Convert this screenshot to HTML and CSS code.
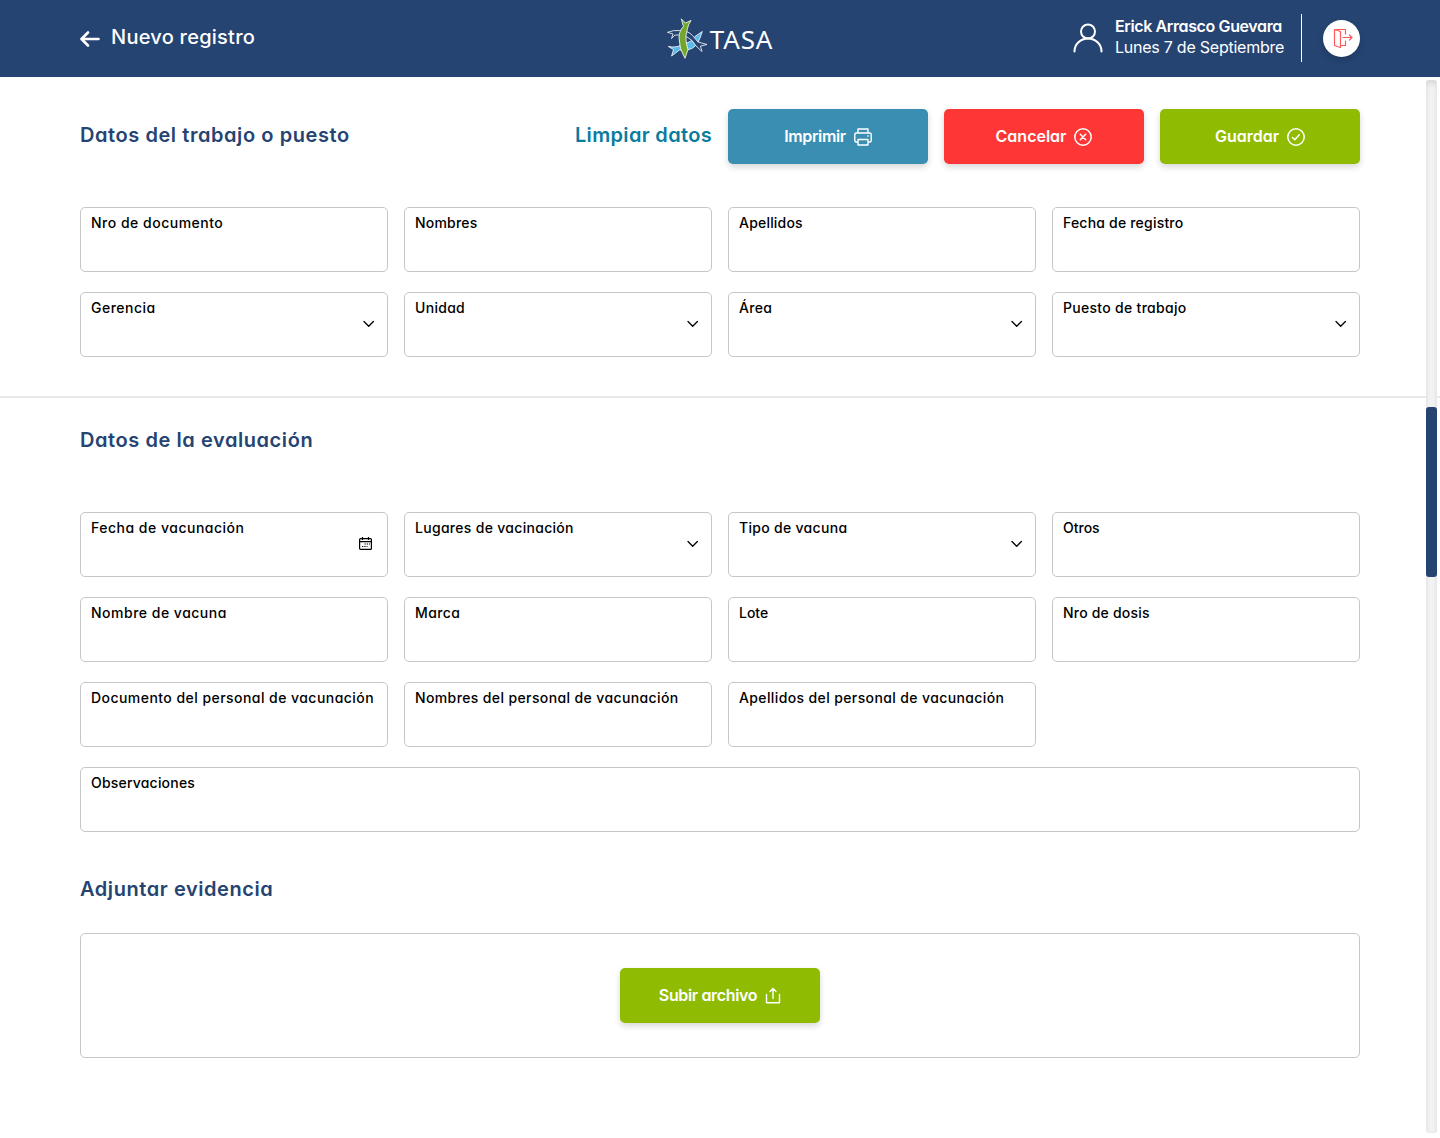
FILE: index.html
```html
<!DOCTYPE html>
<html lang="es">
<head>
<meta charset="utf-8">
<title>Nuevo registro</title>
<link rel="stylesheet" href="styles.css">
</head>
<body>
<svg class="defs" width="0" height="0" aria-hidden="true">
  <symbol id="chevron" viewBox="0 0 12 8"><path d="M1 1.500l4.700 4.700 4.700-4.700" fill="none" stroke="#000" stroke-width="1.300" stroke-linecap="round" stroke-linejoin="round"/></symbol>
</svg>
<header class="topbar">
  <div class="back">
    <svg width="20" height="16" viewBox="0 0 20 16" fill="none" stroke="#fff" stroke-width="2.600" stroke-linecap="round" stroke-linejoin="round"><path d="M18.500 8H1.800M8 1.500L1.500 8 8 14.500"/></svg>
    <h1 class="page-title">Nuevo registro</h1>
  </div>
  <div class="logo">
    <svg width="41" height="42" viewBox="0 0 41 42" stroke="#fff" stroke-width=".8" stroke-linejoin="round">
      <path fill="#5bb8ea" d="M1.300 28.500Q6 29.500 11 28.500 17 25 21 24.500 26 23 28 18.500L35.300 13.500 33 20Q29 30 22 31.500 16 33 12.500 32L4.600 38 6.500 31.500z"/>
      <path fill="#254472" d="M.5 14.300Q6 12 12.600 12.500 21 12.500 25.500 17.500L31 24 40 26.500 33.500 28 35 33.500 29 28 Q25 21 20 19 14 16 8 17L4.500 20.500 6 16z"/>
      <path fill="#72a62c" d="M14.300.8L18.300 5 24 2.500Q21 7 20.500 10.500 18 18 19.300 25L21 31.500 18 40.300Q12 31 12 20 12 13 16.400 8.500z"/>
    </svg>
    <span class="logo-text">TASA</span>
  </div>
  <div class="user">
    <svg class="avatar" width="30" height="30" viewBox="0 0 30 30" fill="none" stroke="#fff" stroke-width="2" stroke-linecap="round"><circle cx="15" cy="8.500" r="7"/><path d="M1.500 28.500a13.500 13 0 0 1 27 0"/></svg>
    <div class="user-info">
      <div class="user-name">Erick Arrasco Guevara</div>
      <div class="user-date">Lunes 7 de Septiembre</div>
    </div>
    <span class="logout">
      <svg width="20" height="21" viewBox="0 0 20 21" fill="none" stroke="#ff5a5a" stroke-width="1.200" stroke-linejoin="round" stroke-linecap="round"><path d="M1.500 1.500l6 2v16l-6-2zM1.500 1.500h11V6M7.500 17.500h5V13M10 9.500h9M16.500 7l2.500 2.500-2.500 2.500"/></svg>
    </span>
  </div>
</header>
<main>
  <section class="section job">
    <div class="toolbar">
      <h2 class="heading h-job">Datos del trabajo o puesto</h2>
      <div class="actions">
        <a class="clear">Limpiar datos</a>
        <button class="btn blue"><span class="tight">Imprimir</span><svg width="18" height="18" viewBox="0 0 18 18" fill="none" stroke="#fff" stroke-width="1.400" stroke-linejoin="round"><path d="M4 5V1h10v4M4 14H2.200Q.8 14 .8 12.500v-6Q.8 5 2.200 5h13.600q1.400 0 1.400 1.500v6q0 1.500-1.400 1.500H14M4 11.500h10V17H4zM13.300 8h1.400"/></svg></button>
        <button class="btn red"><span>Cancelar</span><svg width="18" height="18" viewBox="0 0 18 18" fill="none" stroke="#fff" stroke-width="1.500" stroke-linecap="round"><circle cx="9" cy="9" r="8.200"/><path d="M6.300 6.300l5.400 5.400M11.700 6.300l-5.400 5.400"/></svg></button>
        <button class="btn green"><span>Guardar</span><svg width="18" height="18" viewBox="0 0 18 18" fill="none" stroke="#fff" stroke-width="1.500" stroke-linecap="round" stroke-linejoin="round"><circle cx="9" cy="9" r="8.200"/><path d="M5.500 9.500l2.300 2.200 4.500-5"/></svg></button>
      </div>
    </div>
    <div class="grid">
      <div class="field"><label class="ls-5">Nro de documento</label></div>
      <div class="field"><label class="ls-2">Nombres</label></div>
      <div class="field"><label class="ls-2">Apellidos</label></div>
      <div class="field"><label class="ls-2">Fecha de registro</label></div>
      <div class="field select"><label class="ls-5">Gerencia</label><svg width="12" height="8"><use href="#chevron"/></svg></div>
      <div class="field select"><label class="ls-3">Unidad</label><svg width="12" height="8"><use href="#chevron"/></svg></div>
      <div class="field select"><label class="ls-3">Área</label><svg width="12" height="8"><use href="#chevron"/></svg></div>
      <div class="field select"><label class="ls-3">Puesto de trabajo</label><svg width="12" height="8"><use href="#chevron"/></svg></div>
    </div>
  </section>
  <section class="section evaluation">
    <h2 class="heading h-eval">Datos de la evaluación</h2>
    <div class="grid">
      <div class="field date"><label class="ls-5">Fecha de vacunación</label><svg width="13" height="13" viewBox="0 0 13 13" fill="none" stroke="#000" stroke-width="1.200"><rect x=".6" y="1.600" width="11.800" height="10.800" rx="1"/><path d="M.6 4.600h11.800M3.500 0v3M9.500 0v3"/><path d="M5.500 7H11M3 9.500h5.500" stroke-dasharray="1.300 1"/></svg></div>
      <div class="field select"><label class="ls-3">Lugares de vacinación</label><svg width="12" height="8"><use href="#chevron"/></svg></div>
      <div class="field select"><label class="ls-3">Tipo de vacuna</label><svg width="12" height="8"><use href="#chevron"/></svg></div>
      <div class="field"><label>Otros</label></div>
      <div class="field"><label class="ls-5">Nombre de vacuna</label></div>
      <div class="field"><label class="ls-4">Marca</label></div>
      <div class="field"><label>Lote</label></div>
      <div class="field"><label class="ls-2">Nro de dosis</label></div>
      <div class="field"><label class="ls-45">Documento del personal de vacunación</label></div>
      <div class="field"><label class="ls-4">Nombres del personal de vacunación</label></div>
      <div class="field"><label class="ls-4">Apellidos del personal de vacunación</label></div>
      <div class="field wide"><label class="ls-2">Observaciones</label></div>
    </div>
    <h2 class="heading h-attach">Adjuntar evidencia</h2>
    <div class="upload">
      <button class="btn green"><span class="tight">Subir archivo</span><svg width="16" height="18" viewBox="0 0 16 18" fill="none" stroke="#fff" stroke-width="1.400" stroke-linecap="round" stroke-linejoin="round"><path d="M1.500 7.500v8.300h13V7.500M8 11.500V2M5 4.500L8 1.500l3 3"/></svg></button>
    </div>
  </section>
</main>
<div class="scrollbar"><div class="thumb"></div></div>
</body>
</html>
```
FILE: styles.css
```css
* { box-sizing: border-box; }
body {
  margin: 0;
  height: 1138px;
  position: relative;
  overflow: hidden;
  background: #fff;
  color: #000;
  font-family: Inter, "Liberation Sans", sans-serif;
  font-feature-settings: "cv11";
}
h1, h2 { margin: 0; }
svg { display: block; flex: none; }
.defs { position: absolute; }
.topbar {
  height: 77px;
  padding: 0 80px;
  background: #254472;
  color: #fff;
  display: grid;
  grid-template-columns: 1fr auto 1fr;
  align-items: center;
}
.back { display: flex; align-items: center; gap: 11px; }
.page-title { font-size: 20px; font-weight: 500; line-height: 24px; letter-spacing: .25px; margin-top: -3px; }
.logo { display: flex; align-items: center; gap: 2px; }
.logo-text { font: 26px/30px "Noto Sans", sans-serif; letter-spacing: .8px; }
.user { display: flex; align-items: center; justify-content: flex-end; height: 77px; padding-bottom: 2px; }
.avatar { margin-right: 12px; }
.user-info {
  width: 187px;
  height: 48px;
  border-right: 1px solid #fff;
  font-size: 16px;
  line-height: 21px;
  white-space: nowrap;
  padding-top: 2px;
}
.user-name { font-weight: 600; letter-spacing: -.38px; }
.user-date { letter-spacing: -.24px; }
.logout {
  width: 37px;
  height: 37px;
  margin: 1px 0 0 21px;
  border-radius: 50%;
  background: #fff;
  display: flex;
  align-items: center;
  justify-content: center;
  padding-left: 3px;
  box-shadow: 0 3px 6px rgba(0, 0, 0, .16);
}
.section { padding: 0 80px; }
.job { height: 321px; padding-top: 32px; border-bottom: 2px solid #e9e9e9; }
.toolbar { display: flex; justify-content: space-between; align-items: center; height: 55px; margin-bottom: 43px; }
.heading { font-size: 20px; font-weight: 600; line-height: 24px; letter-spacing: .57px; color: #254472; }
.actions { display: flex; align-items: center; gap: 16px; }
.clear { font-size: 20px; font-weight: 600; line-height: 24px; letter-spacing: .33px; color: #0a7c9e; }
.h-job, .clear { margin-top: -3px; }
.btn {
  width: 200px;
  height: 55px;
  padding: 0;
  border: 0;
  border-radius: 5px;
  color: #fff;
  font: inherit;
  font-size: 16px;
  font-weight: 600;
  display: flex;
  align-items: center;
  justify-content: center;
  gap: 8px;
  box-shadow: 0 3px 6px rgba(0, 0, 0, .16);
}
.btn span { margin-top: -2px; }
.tight { letter-spacing: -.35px; }
.blue { background: #3a8eb1; }
.red { background: #ff3636; }
.green { background: #8fbc03; }
.grid { display: grid; grid-template-columns: repeat(4, 308px); gap: 20px 16px; }
.field {
  height: 65px;
  border: 1px solid #c6c6c6;
  border-radius: 5px;
  padding: 5px 12px 0 10px;
  display: flex;
  justify-content: space-between;
  font-size: 14px;
  font-weight: 500;
  line-height: 19px;
  white-space: nowrap;
}
.field svg { margin-top: 22px; }
.date svg { margin: 19px 3px 0 0; }
.ls-2 { letter-spacing: .2px; }
.ls-3 { letter-spacing: .3px; }
.ls-4 { letter-spacing: .38px; }
.ls-45 { letter-spacing: .45px; }
.ls-5 { letter-spacing: .5px; }
.wide { grid-column: 1 / -1; }
.evaluation { padding-top: 30px; }
.h-eval { margin-bottom: 60px; }
.h-attach { margin: 45px 0 32px; }
.upload {
  height: 125px;
  border: 1px solid #c6c6c6;
  border-radius: 5px;
  display: flex;
  align-items: center;
  justify-content: center;
}
.scrollbar {
  position: absolute;
  top: 80px;
  right: 3px;
  width: 11px;
  height: 1053px;
  padding-top: 327px;
  border-radius: 3px;
  background: #f5f5f5;
  box-shadow: inset 0 3px 6px rgba(0, 0, 0, .13);
}
.thumb { height: 170px; border-radius: 3px; background: #254472; }
```
